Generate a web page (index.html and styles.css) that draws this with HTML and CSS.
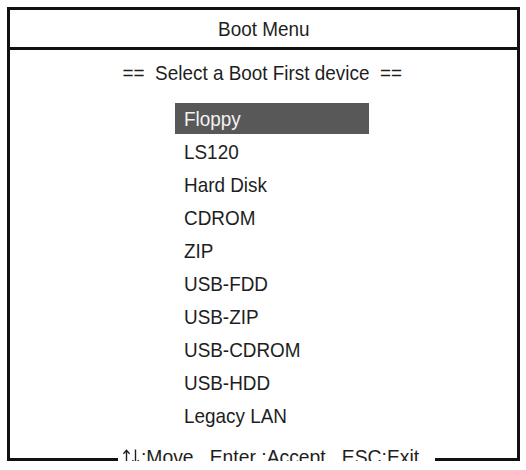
FILE: index.html
```html
<!DOCTYPE html>
<html>
<head>
<meta charset="utf-8">
<link rel="stylesheet" href="styles.css">
</head>
<body>
<div class="frame">
  <div class="header"><span class="t">Boot Menu</span></div>
  <div class="content">
    <div class="subtitle"><span class="t">==  Select a Boot First device  ==</span></div>
    <ul class="list">
      <li class="item selected"><span class="t">Floppy</span></li>
      <li class="item"><span class="t">LS120</span></li>
      <li class="item"><span class="t">Hard Disk</span></li>
      <li class="item"><span class="t">CDROM</span></li>
      <li class="item"><span class="t">ZIP</span></li>
      <li class="item"><span class="t">USB-FDD</span></li>
      <li class="item"><span class="t">USB-ZIP</span></li>
      <li class="item"><span class="t">USB-CDROM</span></li>
      <li class="item"><span class="t">USB-HDD</span></li>
      <li class="item"><span class="t">Legacy LAN</span></li>
    </ul>
  </div>
  <div class="footer"><svg class="arrow" width="7" height="16" viewBox="0 0 7 16"><path d="M3.5 15.5V1.2M0.4 4.8L3.5 1.2L6.6 4.8" fill="none" stroke="#1e1e1e" stroke-width="1.4"/></svg><svg class="arrow" width="7" height="16" viewBox="0 0 7 16"><path d="M3.5 0.5V14.8M0.4 11.2L3.5 14.8L6.6 11.2" fill="none" stroke="#1e1e1e" stroke-width="1.4"/></svg><span class="ft">:Move   Enter :Accept   ESC:Exit</span></div>
</div>
</body>
</html>
```

FILE: styles.css
```css
html, body {
  margin: 0;
  padding: 0;
  background: #ffffff;
}
body {
  font-family: "Liberation Sans", Arial, sans-serif;
  color: #1e1e1e;
  font-size: 21px;
}
.t {
  display: inline-block;
  transform: scaleX(0.9);
}
.frame {
  position: relative;
  margin: 7px 0 0 7px;
  width: 507px;
  height: 448px;
  border: 3px solid #111;
}
.header {
  height: 37px;
  line-height: 37px;
  text-align: center;
  border-bottom: 3px solid #111;
  padding-left: 1px;
}
.header .t {
  transform-origin: center;
}
.content {
  display: flex;
  flex-direction: column;
}
.subtitle {
  margin-top: 11px;
  height: 24px;
  line-height: 24px;
  text-align: center;
  white-space: pre;
  padding-right: 2px;
}
.list {
  list-style: none;
  margin: 18px 0 0 165px;
  padding: 0;
  width: 194px;
  display: flex;
  flex-direction: column;
  gap: 2px;
}
.item {
  height: 31px;
  line-height: 31px;
  padding-left: 9px;
}
.item .t {
  transform-origin: left center;
}
.item.selected {
  background: #585858;
  color: #f2f2f2;
}
.footer {
  position: absolute;
  left: 108px;
  bottom: -9px;
  height: 20px;
  line-height: 20px;
  width: 317px;
  padding-left: 5px;
  box-sizing: border-box;
  background: #ffffff;
  display: flex;
  align-items: center;
  white-space: pre;
}
.arrow {
  flex: none;
  margin-right: 2px;
}
.ft {
  display: inline-block;
  transform: scaleX(0.92);
  transform-origin: left center;
}
```
